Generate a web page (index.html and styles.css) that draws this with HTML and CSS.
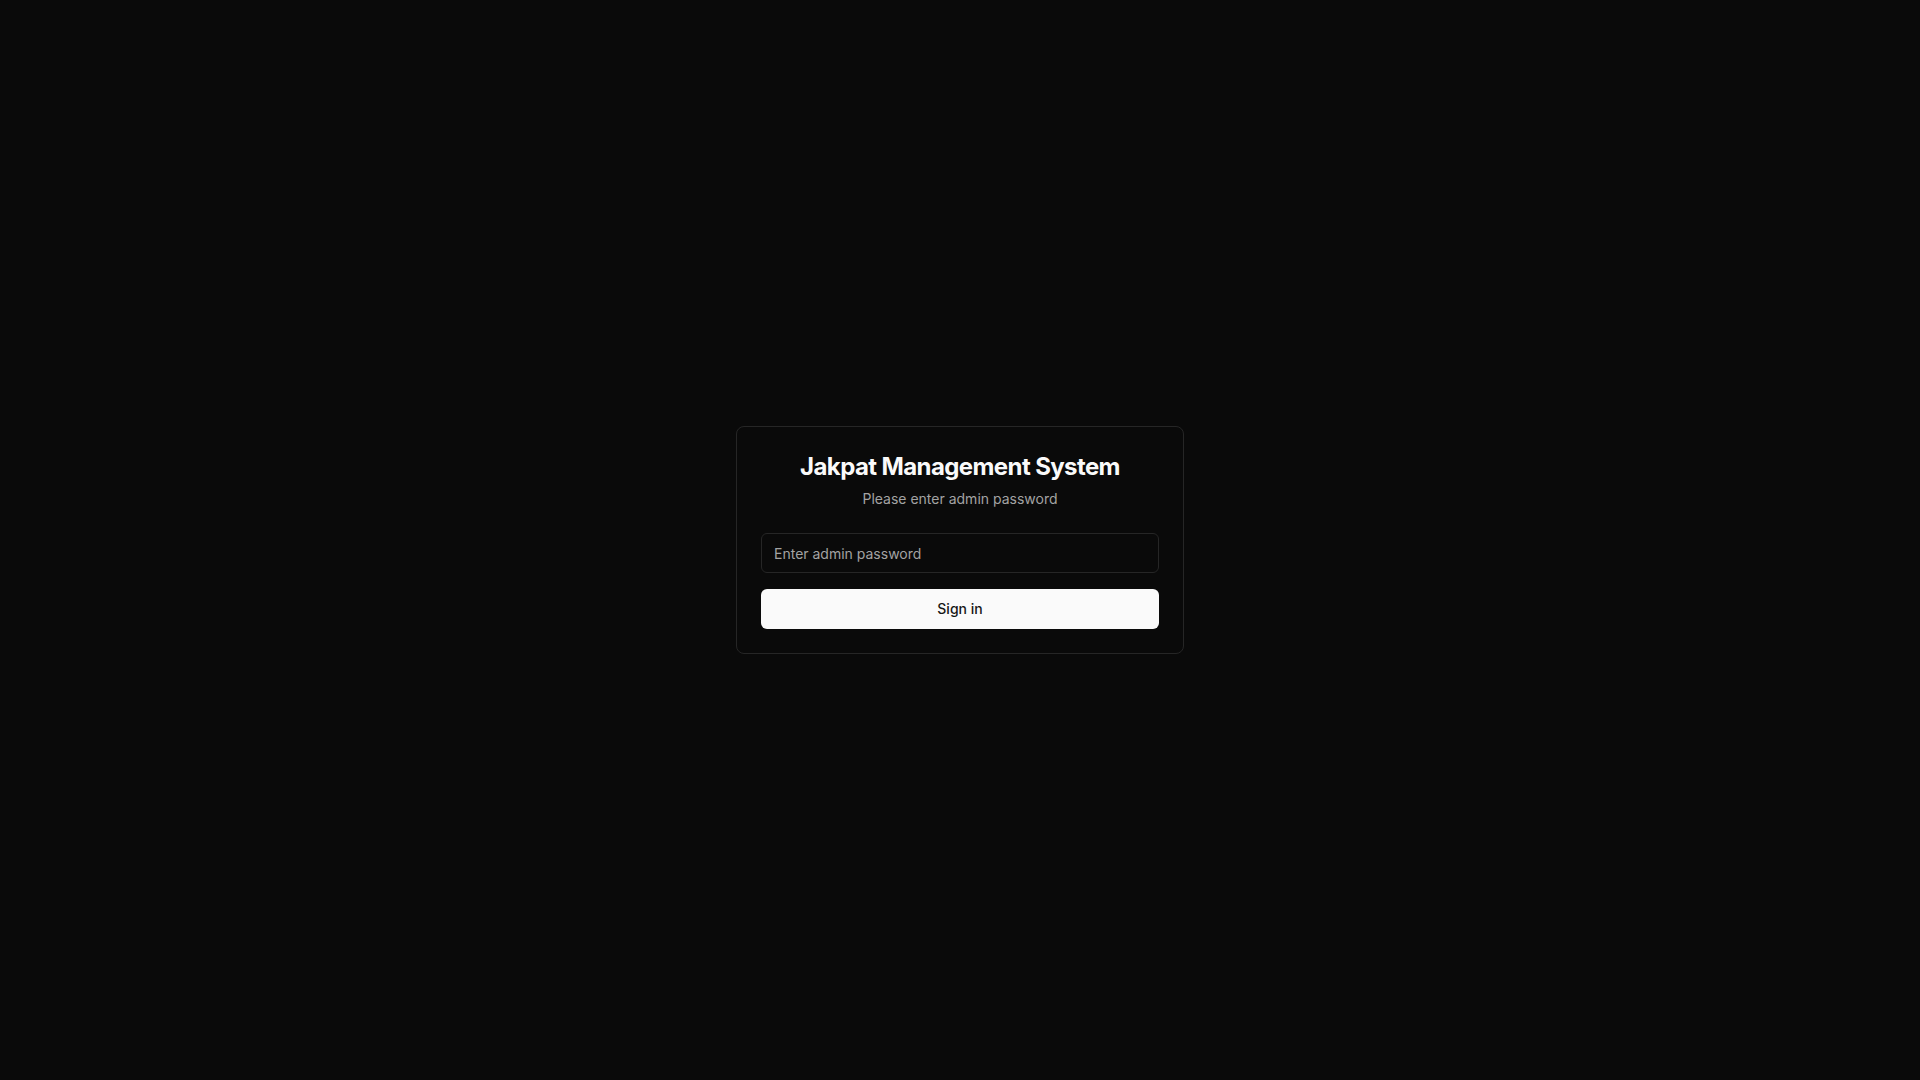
FILE: index.html
```html
<!DOCTYPE html>
<html lang="en">
<head>
  <meta charset="UTF-8">
  <meta name="viewport" content="width=device-width, initial-scale=1.0">
  <title>Jakpat Management System</title>
  <link rel="stylesheet" href="styles.css">
</head>
<body>
  <main class="login">
    <div class="card">
      <div class="card-header">
        <h1 class="card-title">Jakpat Management System</h1>
        <p class="card-text">Please enter admin password</p>
      </div>
      <form class="card-form">
        <input class="input" type="password" name="password" placeholder="Enter admin password" aria-label="Admin password">
        <button class="button" type="submit">Sign in</button>
      </form>
    </div>
  </main>
</body>
</html>
```

FILE: styles.css
```css
* {
  box-sizing: border-box;
  margin: 0;
}
body {
  background-color: #0a0a0a;
  color: #fafafa;
  font-family: Inter, sans-serif;
}
.login {
  display: flex;
  align-items: center;
  justify-content: center;
  min-height: 100vh;
}
.card {
  width: 100%;
  max-width: 448px;
  border: 1px solid #262626;
  border-radius: 8px;
}
.card-header {
  display: flex;
  flex-direction: column;
  gap: 6px;
  padding: 24px;
  text-align: center;
}
.card-title {
  font-size: 24px;
  line-height: 32px;
  font-weight: 700;
  letter-spacing: -0.025em;
}
.card-text {
  font-size: 14px;
  line-height: 20px;
  color: #a3a3a3;
}
.card-form {
  display: flex;
  flex-direction: column;
  gap: 16px;
  padding: 0 24px 24px;
}
.input {
  width: 100%;
  height: 40px;
  padding: 8px 12px;
  border: 1px solid #262626;
  border-radius: 6px;
  background-color: #0a0a0a;
  color: #fafafa;
  font-family: inherit;
  font-size: 14px;
  line-height: 20px;
}
.input::placeholder {
  color: #a3a3a3;
}
.button {
  height: 40px;
  padding: 8px 16px;
  border: 0;
  border-radius: 6px;
  background-color: #fafafa;
  color: #171717;
  font-family: inherit;
  font-size: 14px;
  line-height: 20px;
  font-weight: 500;
  cursor: pointer;
}
```
